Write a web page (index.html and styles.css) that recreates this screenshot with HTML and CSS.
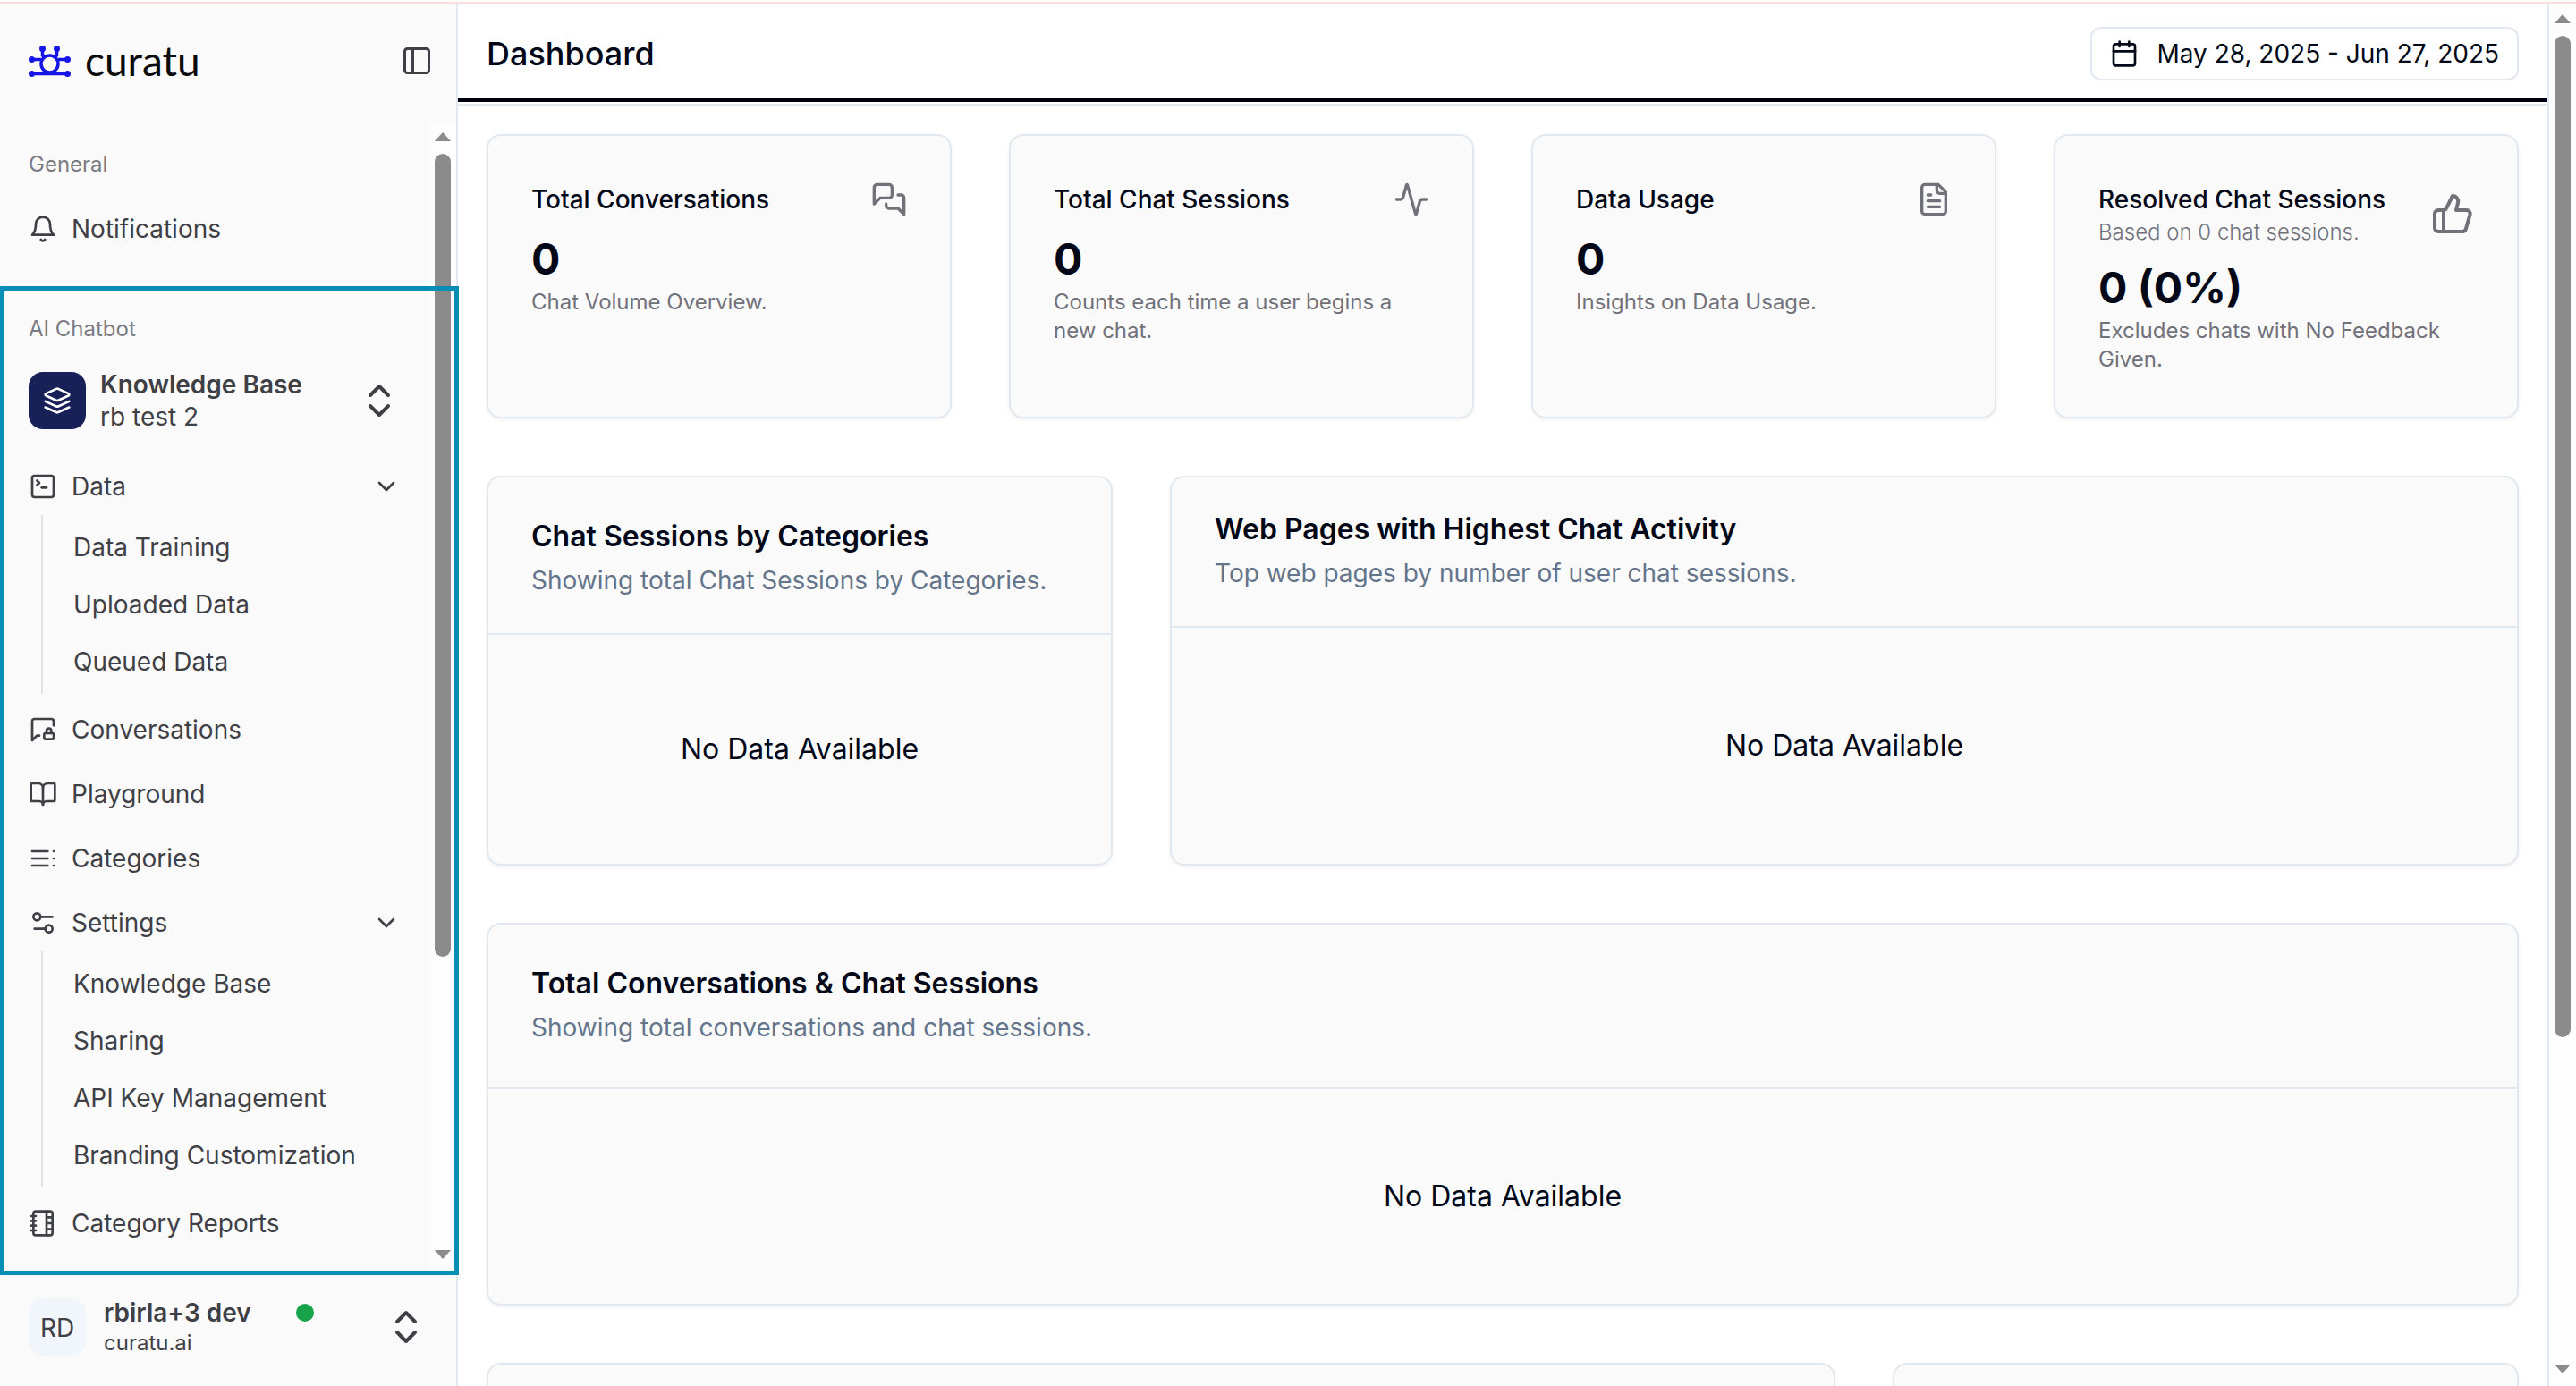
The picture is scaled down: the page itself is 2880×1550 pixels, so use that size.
FILE: index.html
```html
<!DOCTYPE html>
<html lang="en">
<head>
    <meta charset="utf-8">
    <title>Dashboard - curatu</title>
    <meta name="viewport" content="width=device-width,initial-scale=1">
    <link rel="stylesheet" href="styles.css">
</head>
<body>
<div class="app">

    <aside class="sidebar">
        <div class="sidebar-header">
            <a class="logo" href="#">
                <svg class="logo-mark" viewBox="0 0 47 35" fill="#1515e6" stroke="#1515e6" stroke-width="3.5">
                    <circle cx="23.5" cy="20.5" r="9.5" fill="none"/>
                    <path d="M15.5 3v8l3 3M31.5 3v8l-3 3M3.5 15.5H14M33 15.5h10.5M3.5 31.5h40" fill="none"/>
                    <g stroke="none">
                        <circle cx="15.5" cy="3.5" r="3.5"/><circle cx="31.5" cy="3.5" r="3.5"/>
                        <circle cx="3.5" cy="15.5" r="3.5"/><circle cx="43.5" cy="15.5" r="3.5"/>
                        <circle cx="3.5" cy="31.5" r="3.5"/><circle cx="43.5" cy="31.5" r="3.5"/>
                    </g>
                </svg>
                <span>curatu</span>
            </a>
            <button class="icon-btn" type="button" aria-label="Toggle sidebar">
                <svg class="icon icon-36" viewBox="0 0 24 24"><rect width="18" height="18" x="3" y="3" rx="2"/><path d="M9 3v18"/></svg>
            </button>
        </div>

        <div class="sidebar-body">
            <nav class="nav">
                <div class="group">
                    <div class="group-label">General</div>
                    <a class="nav-item nav-first" href="#">
                        <svg class="icon" viewBox="0 0 24 24"><path d="M6 8a6 6 0 0 1 12 0c0 7 3 9 3 9H3s3-2 3-9"/><path d="M10.3 21a1.94 1.94 0 0 0 3.4 0"/></svg>
                        <span>Notifications</span>
                    </a>
                </div>

                <div class="group">
                    <div class="group-label">AI Chatbot</div>
                    <button class="kb-switch" type="button">
                        <span class="kb-logo">
                            <svg class="icon" viewBox="0 0 24 24"><path d="m12.83 2.18a2 2 0 0 0-1.66 0L2.6 6.08a1 1 0 0 0 0 1.83l8.58 3.91a2 2 0 0 0 1.66 0l8.58-3.9a1 1 0 0 0 0-1.83Z"/><path d="m22 17.65-9.17 4.16a2 2 0 0 1-1.66 0L2 17.65"/><path d="m22 12.65-9.17 4.16a2 2 0 0 1-1.66 0L2 12.65"/></svg>
                        </span>
                        <span class="two-lines">
                            <strong>Knowledge Base</strong>
                            <span>rb test 2</span>
                        </span>
                        <svg class="icon icon-48" viewBox="0 0 24 24"><path d="m7 15 5 5 5-5"/><path d="m7 9 5-5 5 5"/></svg>
                    </button>

                    <ul class="menu">
                        <li>
                            <button class="nav-item" type="button">
                                <svg class="icon" viewBox="0 0 24 24"><path d="m7 11 2-2-2-2"/><path d="M11 13h4"/><rect width="18" height="18" x="3" y="3" rx="2"/></svg>
                                <span>Data</span>
                                <svg class="icon chevron" viewBox="0 0 24 24"><path d="m6 9 6 6 6-6"/></svg>
                            </button>
                            <ul class="submenu">
                                <li><a href="#">Data Training</a></li>
                                <li><a href="#">Uploaded Data</a></li>
                                <li><a href="#">Queued Data</a></li>
                            </ul>
                        </li>
                        <li>
                            <a class="nav-item" href="#">
                                <svg class="icon" viewBox="0 0 24 24"><path d="M19 15v-2a2 2 0 1 0-4 0v2"/><path d="M9 17H7l-4 4V5a2 2 0 0 1 2-2h14a2 2 0 0 1 2 2v3.5"/><rect x="13" y="15" width="8" height="5" rx="1"/></svg>
                                <span>Conversations</span>
                            </a>
                        </li>
                        <li>
                            <a class="nav-item" href="#">
                                <svg class="icon" viewBox="0 0 24 24"><path d="M12 7v14"/><path d="M3 18a1 1 0 0 1-1-1V4a1 1 0 0 1 1-1h5a4 4 0 0 1 4 4 4 4 0 0 1 4-4h5a1 1 0 0 1 1 1v13a1 1 0 0 1-1 1h-6a3 3 0 0 0-3 3 3 3 0 0 0-3-3z"/></svg>
                                <span>Playground</span>
                            </a>
                        </li>
                        <li>
                            <a class="nav-item" href="#">
                                <svg class="icon" viewBox="0 0 24 24"><path d="M16 12H3M16 18H3M16 6H3M21 12h.01M21 18h.01M21 6h.01"/></svg>
                                <span>Categories</span>
                            </a>
                        </li>
                        <li>
                            <button class="nav-item" type="button">
                                <svg class="icon" viewBox="0 0 24 24"><path d="M20 7h-9M14 17H5"/><circle cx="17" cy="17" r="3"/><circle cx="7" cy="7" r="3"/></svg>
                                <span>Settings</span>
                                <svg class="icon chevron" viewBox="0 0 24 24"><path d="m6 9 6 6 6-6"/></svg>
                            </button>
                            <ul class="submenu">
                                <li><a href="#">Knowledge Base</a></li>
                                <li><a href="#">Sharing</a></li>
                                <li><a href="#">API Key Management</a></li>
                                <li><a href="#">Branding Customization</a></li>
                            </ul>
                        </li>
                        <li>
                            <a class="nav-item" href="#">
                                <svg class="icon" viewBox="0 0 24 24"><path d="M2 6h4M2 10h4M2 14h4M2 18h4"/><rect width="16" height="20" x="4" y="2" rx="2"/><path d="M15 2v20M15 7h5M15 12h5M15 17h5"/></svg>
                                <span>Category Reports</span>
                            </a>
                        </li>
                    </ul>
                </div>
            </nav>
            <div class="scrollbar">
                <svg class="arrow" viewBox="0 0 18 10"><path d="M9 0l9 10H0z"/></svg>
                <div class="rail"><div class="thumb thumb-nav"></div></div>
                <svg class="arrow" viewBox="0 0 18 10"><path d="M0 0h18L9 10z"/></svg>
            </div>
            <div class="highlight"></div>
        </div>

        <button class="user" type="button">
            <span class="avatar">RD</span>
            <span class="two-lines">
                <strong>rbirla+3 dev</strong>
                <small>curatu.ai</small>
            </span>
            <span class="status"></span>
            <svg class="icon icon-48" viewBox="0 0 24 24"><path d="m7 15 5 5 5-5"/><path d="m7 9 5-5 5 5"/></svg>
        </button>
    </aside>

    <main class="main">
        <header class="topbar">
            <h1>Dashboard</h1>
            <button class="date-btn" type="button">
                <svg class="icon" viewBox="0 0 24 24"><path d="M8 2v4M16 2v4"/><rect width="18" height="18" x="3" y="4" rx="2"/><path d="M3 10h18"/></svg>
                <span>May 28, 2025 - Jun 27, 2025</span>
            </button>
        </header>

        <div class="content">
            <section class="stats">
                <div class="card stat">
                    <div class="stat-head">
                        <h2>Total Conversations</h2>
                        <svg class="icon icon-40" viewBox="0 0 24 24"><path d="M14 9a2 2 0 0 1-2 2H6l-4 4V4c0-1.1.9-2 2-2h8a2 2 0 0 1 2 2z"/><path d="M18 9h2a2 2 0 0 1 2 2v11l-4-4h-6a2 2 0 0 1-2-2v-1"/></svg>
                    </div>
                    <div class="value">0</div>
                    <p>Chat Volume Overview.</p>
                </div>
                <div class="card stat">
                    <div class="stat-head">
                        <h2>Total Chat Sessions</h2>
                        <svg class="icon icon-40" viewBox="0 0 24 24"><path d="M22 12h-2.48a2 2 0 0 0-1.93 1.46l-2.35 8.36a.25.25 0 0 1-.48 0L9.24 2.18a.25.25 0 0 0-.48 0l-2.35 8.36A2 2 0 0 1 4.49 12H2"/></svg>
                    </div>
                    <div class="value">0</div>
                    <p>Counts each time a user begins a new chat.</p>
                </div>
                <div class="card stat">
                    <div class="stat-head">
                        <h2>Data Usage</h2>
                        <svg class="icon icon-40" viewBox="0 0 24 24"><path d="M15 2H6a2 2 0 0 0-2 2v16a2 2 0 0 0 2 2h12a2 2 0 0 0 2-2V7Z"/><path d="M14 2v4a2 2 0 0 0 2 2h4"/><path d="M10 9H8M16 13H8M16 17H8"/></svg>
                    </div>
                    <div class="value">0</div>
                    <p>Insights on Data Usage.</p>
                </div>
                <div class="card stat">
                    <div class="stat-head">
                        <div>
                            <h2>Resolved Chat Sessions</h2>
                            <p class="light">Based on 0 chat sessions.</p>
                        </div>
                        <svg class="icon icon-48" viewBox="0 0 24 24"><path d="M7 10v12"/><path d="M15 5.88 14 10h5.83a2 2 0 0 1 1.92 2.56l-2.33 8A2 2 0 0 1 17.5 22H4a2 2 0 0 1-2-2v-8a2 2 0 0 1 2-2h2.76a2 2 0 0 0 1.79-1.11L12 2a3.13 3.13 0 0 1 3 3.88Z"/></svg>
                    </div>
                    <div class="value">0 (0%)</div>
                    <p>Excludes chats with No Feedback Given.</p>
                </div>
            </section>

            <section class="row narrow-wide">
                <div class="card panel">
                    <div class="panel-head panel-head-mid">
                        <h3>Chat Sessions by Categories</h3>
                        <p>Showing total Chat Sessions by Categories.</p>
                    </div>
                    <div class="empty">No Data Available</div>
                </div>
                <div class="card panel">
                    <div class="panel-head panel-head-small">
                        <h3>Web Pages with Highest Chat Activity</h3>
                        <p>Top web pages by number of user chat sessions.</p>
                    </div>
                    <div class="empty">No Data Available</div>
                </div>
            </section>

            <section class="card panel panel-full">
                <div class="panel-head">
                    <h3>Total Conversations &amp; Chat Sessions</h3>
                    <p>Showing total conversations and chat sessions.</p>
                </div>
                <div class="empty">No Data Available</div>
            </section>

            <section class="row wide-narrow">
                <div class="card panel"></div>
                <div class="card panel"></div>
            </section>
        </div>
    </main>

    <div class="scrollbar scrollbar-page">
        <svg class="arrow" viewBox="0 0 18 10"><path d="M9 0l9 10H0z"/></svg>
        <div class="rail"><div class="thumb thumb-page"></div></div>
        <svg class="arrow" viewBox="0 0 18 10"><path d="M0 0h18L9 10z"/></svg>
    </div>
</div>
</body>
</html>
```
FILE: styles.css
```css
*{
    box-sizing: border-box;
}
body{
    margin: 0;
    padding-top: 2px;
    font-family: Inter, "Liberation Sans", sans-serif;
    font-size: 28px;
    line-height: 42px;
    color: #020817;
    background: #fff;
}
h1, h2, h3, p, ul{
    margin: 0;
    padding: 0;
}
ul{
    list-style: none;
}
a{
    color: inherit;
    text-decoration: none;
}
button{
    font: inherit;
    color: inherit;
    text-align: left;
    background: none;
    border: 0;
    padding: 0;
    cursor: pointer;
}
.app{
    display: flex;
    height: calc(100vh - 2px);
    overflow: hidden;
    border-top: 2px solid #f9dfda;
}

/* icons */
.icon{
    flex: none;
    width: 32px;
    height: 32px;
    fill: none;
    stroke: currentColor;
    stroke-width: 2;
    stroke-linecap: round;
    stroke-linejoin: round;
}
.icon-36{
    width: 36px;
    height: 36px;
}
.icon-40{
    width: 40px;
    height: 40px;
}
.icon-48{
    width: 48px;
    height: 48px;
}

/* sidebar */
.sidebar{
    display: flex;
    flex-direction: column;
    flex: none;
    width: 512px;
    color: #3f3f46;
    background: #fafafa;
    border-right: 2px solid #e2e8f0;
}
.sidebar-header{
    display: flex;
    align-items: center;
    justify-content: space-between;
    height: 132px;
    padding: 0 26px 4px 32px;
}
.logo{
    display: flex;
    align-items: center;
    gap: 16px;
    font-family: Lato, sans-serif;
    font-size: 46px;
    line-height: 46px;
    color: #0a0a0a;
}
.logo-mark{
    width: 47px;
    height: 35px;
}
.icon-btn{
    display: flex;
}
.sidebar-body{
    position: relative;
    display: flex;
    flex: 1;
    min-height: 0;
}
.nav{
    flex: 1;
    min-width: 0;
    padding-top: 16px;
    overflow: hidden;
}
.group{
    padding: 0 32px;
    margin-bottom: 48px;
}
.group-label{
    font-size: 24px;
    line-height: 64px;
    color: #7b7b82;
}
.nav-item{
    display: flex;
    align-items: center;
    gap: 16px;
    width: 100%;
    height: 64px;
}
.nav-first{
    margin-top: 8px;
}
.chevron{
    margin-left: auto;
}
.kb-switch{
    display: flex;
    align-items: center;
    gap: 16px;
    width: 100%;
    height: 96px;
}
.kb-logo{
    display: flex;
    align-items: center;
    justify-content: center;
    width: 64px;
    height: 64px;
    color: #fff;
    background: #172157;
    border-radius: 16px;
}
.two-lines{
    display: flex;
    flex-direction: column;
    line-height: 36px;
}
.two-lines strong{
    font-weight: 600;
}
.two-lines small{
    font-size: 24px;
    line-height: 32px;
}
.kb-switch .icon-48{
    margin-left: auto;
}
.menu{
    display: flex;
    flex-direction: column;
    gap: 8px;
    margin-top: 16px;
}
.submenu{
    display: flex;
    flex-direction: column;
    gap: 8px;
    margin-left: 14px;
    padding: 8px 0 8px 34px;
    border-left: 2px solid #e4e4e7;
}
.submenu a{
    display: block;
    line-height: 56px;
}
/* frame around the AI Chatbot group */
.highlight{
    position: absolute;
    top: 184px;
    right: -3px;
    bottom: -4px;
    left: 0;
    border: 5px solid #068eb5;
    pointer-events: none;
}
.user{
    display: flex;
    align-items: center;
    gap: 20px;
    padding: 28px 32px 32px;
}
.avatar{
    width: 64px;
    height: 64px;
    line-height: 66px;
    text-align: center;
    background: #f0f6fb;
    border-radius: 16px;
}
.status{
    align-self: flex-start;
    width: 20px;
    height: 20px;
    margin: 8px 0 0 30px;
    border-radius: 50%;
    background: #16a34a;
}
.user .icon-48{
    margin-left: auto;
}

/* scrollbars */
.scrollbar{
    display: flex;
    flex-direction: column;
    align-items: center;
    flex: none;
    width: 30px;
    background: #fdfdfd;
}
.scrollbar-page{
    width: 32px;
    border-left: 2px solid #e2e8f0;
}
.arrow{
    flex: none;
    width: 18px;
    height: 10px;
    margin: 12px 0 14px;
    fill: #8b8b8b;
}
.rail{
    flex: 1;
    width: 18px;
}
.thumb{
    border-radius: 9px;
    background: #8b8b8b;
}
.thumb-nav{
    height: 74%;
}
.thumb-page{
    height: 76%;
}

/* main */
.main{
    display: flex;
    flex-direction: column;
    flex: 1;
    min-width: 0;
}
.topbar{
    display: flex;
    align-items: center;
    justify-content: space-between;
    flex: none;
    height: 110px;
    padding: 6px 32px 0;
    border-bottom: 4px solid #000014;
}
.topbar h1{
    font-size: 36px;
    font-weight: 500;
}
.date-btn{
    display: flex;
    align-items: center;
    gap: 20px;
    height: 60px;
    padding: 0 20px;
    border: 2px solid #e2e8f0;
    border-radius: 12px;
}
.content{
    display: flex;
    flex-direction: column;
    gap: 64px;
    flex: 1;
    min-height: 0;
    margin-top: 2px;
    padding: 32px 32px 0;
    overflow: hidden;
    border-top: 2px solid #e2e8f0;
}
.card{
    background: #fafafa;
    border: 2px solid #e2e8f0;
    border-radius: 16px;
    box-shadow: 0 2px 4px rgba(0, 0, 0, .05);
}
.stats{
    display: grid;
    grid-template-columns: repeat(4, minmax(0, 1fr));
    gap: 64px;
}
.stat{
    padding: 50px 48px 48px;
}
.stat-head{
    display: flex;
    align-items: center;
    justify-content: space-between;
    margin-bottom: 14px;
    color: #71717a;
}
.stat h2{
    font-size: 28px;
    font-weight: 500;
    color: #020817;
}
.value{
    font-size: 48px;
    font-weight: 700;
    line-height: 64px;
}
.stat p{
    font-size: 24px;
    line-height: 32px;
    color: #71717a;
}
.stat .light{
    font-weight: 300;
}
.row{
    display: grid;
    flex: none;
    gap: 64px;
}
.narrow-wide{
    grid-template-columns: minmax(0, 175fr) minmax(0, 377fr);
}
.wide-narrow{
    grid-template-columns: minmax(0, 377fr) minmax(0, 175fr);
}
.panel{
    display: flex;
    flex-direction: column;
    flex: none;
    min-height: 436px;
}
.panel-full{
    min-height: 428px;
}
.panel-head{
    padding: 50px 48px 46px;
    border-bottom: 2px solid #e2e8f0;
}
.panel-head-mid{
    padding-bottom: 38px;
}
.panel-head-small{
    padding: 42px 48px 38px;
}
.panel h3{
    margin-bottom: 12px;
    font-size: 32px;
    font-weight: 600;
    line-height: 32px;
}
.panel p{
    color: #64748b;
}
.empty{
    display: flex;
    align-items: center;
    justify-content: center;
    flex: 1;
    font-size: 32px;
}
```
